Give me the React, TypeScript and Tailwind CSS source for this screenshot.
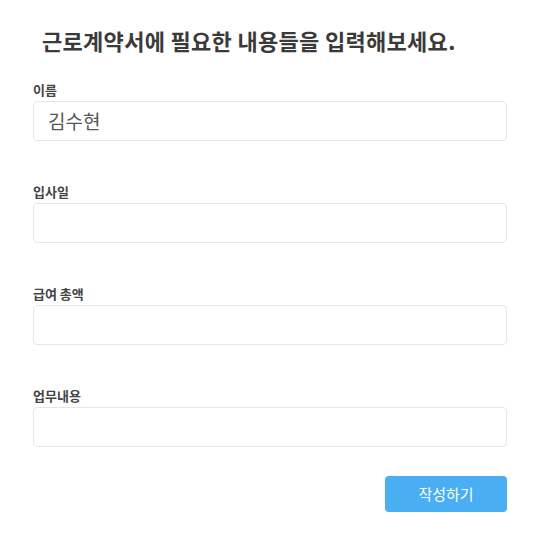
const fields = [
  { label: "이름", value: "김수현" },
  { label: "입사일", value: "" },
  { label: "급여 총액", value: "" },
  { label: "업무내용", value: "" },
];

export default function App() {
  return (
    <div
      className="w-[540px] h-[540px] bg-white px-[33px] pt-[24px]"
      style={{ fontFamily: '"Noto Sans CJK KR", "Noto Sans", sans-serif' }}
    >
      <h1 className="text-[22px] leading-[32px] font-bold text-[#3a3a3a] pl-[9px] tracking-[0.3px]">
        근로계약서에 필요한 내용들을 입력해보세요.
      </h1>

      <div className="mt-[25px] flex flex-col gap-[42px]">
        {fields.map((f) => (
          <div key={f.label}>
            <label className="block text-[13px] leading-[18px] font-bold text-[#444]">
              {f.label}
            </label>
            <div className="mt-[2px] h-[40px] rounded-[4px] border border-[#e6e6e6] bg-white flex items-center px-[14px]">
              <span className="text-[19px] text-[#555]">{f.value}</span>
            </div>
          </div>
        ))}
      </div>

      <div className="flex justify-end mt-[29px]">
        <button className="w-[122px] h-[36px] rounded-[4px] bg-[#4aaef3] text-white text-[15px]">
          작성하기
        </button>
      </div>
    </div>
  );
}
